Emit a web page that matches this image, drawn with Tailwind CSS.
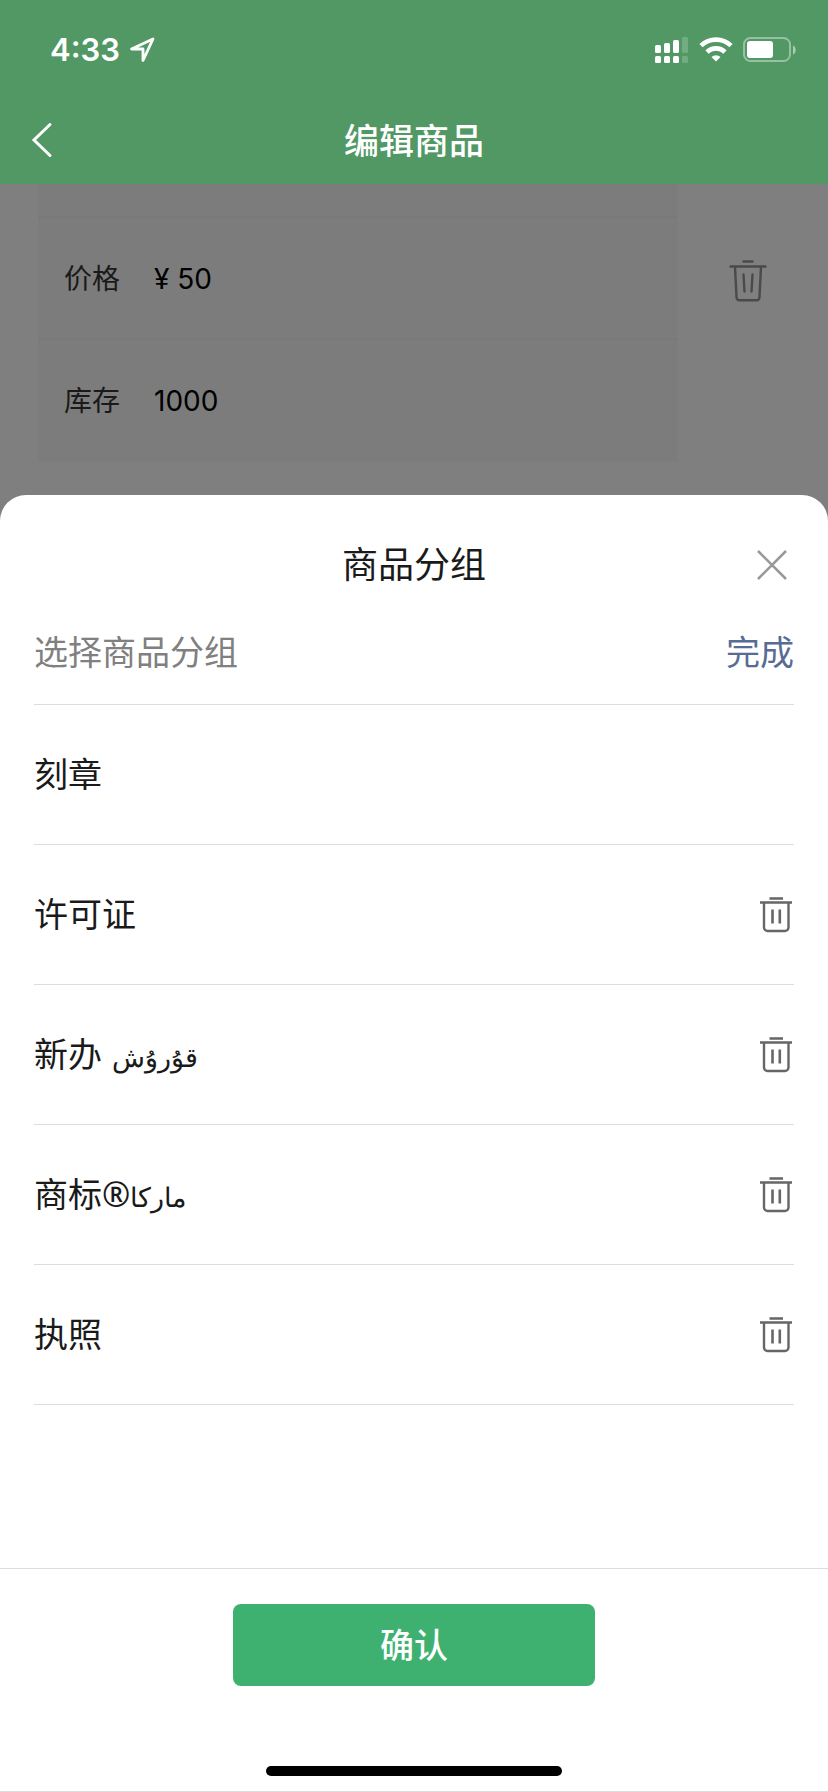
<!DOCTYPE html>
<html lang="zh-CN">
<head>
<meta charset="utf-8">
<meta name="viewport" content="width=device-width, initial-scale=1">
<title>编辑商品</title>
<script src="https://cdn.jsdelivr.net/npm/@tailwindcss/browser@4"></script>
</head>
<body class="flex min-h-screen flex-col bg-[#7f7f7f] font-['Inter','Noto_Sans_CJK_SC',sans-serif] text-[#1a1a1a]">
<svg class="hidden" aria-hidden="true">
  <symbol id="trash" viewBox="0 0 36 36" fill="none" stroke="currentColor">
    <path d="M11.500 1.500h13.500M2 5.500h32" stroke-width="2.400"/>
    <path d="M6 6v24.500a3.500 3.500 0 0 0 3.500 3.500h17.500a3.500 3.500 0 0 0 3.500-3.500V6" stroke-width="2.400"/>
    <path d="M14.500 12.500v14M21.800 12.500v14" stroke-width="2.600"/>
  </symbol>
</svg>

<header class="bg-[#519865] text-white">
  <div class="flex h-[100px] items-center justify-between pr-8 pl-[50px]">
    <div class="flex items-center gap-2">
      <time class="text-[31px] leading-10 font-semibold">4:33</time>
      <svg class="size-7" viewBox="0 0 28 28" fill="none" stroke="currentColor" stroke-width="2.800" stroke-linejoin="round"><path d="M25 3 3.500 13H15v11.500z"/></svg>
    </div>
    <div class="flex items-center gap-[10px]">
      <svg class="h-[26px] w-[34px]" viewBox="0 0 34 26" fill="currentColor">
        <rect x="0" y="8" width="6" height="8" rx="1.500"/><rect x="9" y="6" width="6" height="10" rx="1.500"/><rect x="18" y="3" width="6" height="13" rx="1.500"/><rect x="27" y="0" width="6" height="16" rx="1.500" opacity=".2"/>
        <rect x="0" y="19" width="6" height="7" rx="1.500"/><rect x="9" y="19" width="6" height="7" rx="1.500"/><rect x="18" y="19" width="6" height="7" rx="1.500"/><rect x="27" y="19" width="6" height="7" rx="1.500" opacity=".2"/>
      </svg>
      <svg class="h-[26px] w-[34px]" viewBox="0 0 34 26" fill="none" stroke="currentColor" stroke-width="4.600">
        <path d="M2 8.700a21.500 21.500 0 0 1 30 0M8 15a13 13 0 0 1 18 0"/>
        <path d="M12.500 20a6.500 6.500 0 0 1 9 0L17 24.500z" fill="currentColor" stroke="none"/>
      </svg>
      <svg class="h-[26px] w-[53px]" viewBox="0 0 53 26" fill="currentColor">
        <rect x="1" y="1" width="46" height="23" rx="6.500" fill="none" stroke="currentColor" stroke-width="2" opacity=".4"/>
        <rect x="4" y="4" width="26" height="17" rx="3"/>
        <path d="M50 8.500c3.600 1.200 3.600 7.800 0 9z" opacity=".5"/>
      </svg>
    </div>
  </div>
  <div class="grid h-[84px] grid-cols-[1fr_auto_1fr] items-start px-6">
    <button type="button" aria-label="返回" class="mt-5 size-10 justify-self-start">
      <svg class="size-10" viewBox="0 0 40 40" fill="none" stroke="currentColor" stroke-width="3" stroke-linecap="round"><path d="M26 4.500 10 20l16 15.500"/></svg>
    </button>
    <h1 class="mt-[17px] text-[35px] leading-12 font-medium">编辑商品</h1>
  </div>
</header>

<main class="mb-[33px] flex items-start">
  <dl class="ml-[38px] min-w-0 flex-1 bg-[#7c7c7c] text-[28px]">
    <div class="h-[34px] border-b-2 border-[#797979]"></div>
    <div class="flex h-[122px] items-center border-b-2 border-[#797979] pt-[2px] pl-[26px]">
      <dt class="w-[90px]">价格</dt><dd class="text-black">¥ 50</dd>
    </div>
    <div class="flex h-[122px] items-center pl-[26px]">
      <dt class="w-[90px]">库存</dt><dd class="text-black">1000</dd>
    </div>
  </dl>
  <button type="button" aria-label="删除规格" class="mt-[74px] flex w-[150px] justify-center pr-[10px] text-[#4a4a4a]">
    <svg class="size-[46px]" viewBox="0 0 46 46" fill="none" stroke="currentColor" stroke-width="2.400" stroke-linecap="round"><path d="M18.500 3.500h9M5.500 8.500h35M10 9l1.500 30a3 3 0 0 0 3 3.300h17a3 3 0 0 0 3-3.300L36 9M18.500 16.500l1 17M27.500 16.500l-1 17"/></svg>
  </button>
</main>

<section role="dialog" aria-labelledby="sheet-title" class="flex flex-1 flex-col rounded-t-[26px] border-b border-[#dddddd] bg-white pt-[34px]">
  <div class="grid h-[72px] grid-cols-[1fr_auto_1fr] items-center px-[34px]">
    <h2 id="sheet-title" class="col-start-2 text-[36px] leading-12">商品分组</h2>
    <button type="button" aria-label="关闭" class="mr-1 justify-self-end text-[#999999]">
      <svg class="size-9" viewBox="0 0 36 36" fill="none" stroke="currentColor" stroke-width="2.600"><path d="m4 4 28 28M32 4 4 32"/></svg>
    </button>
  </div>
  <div class="mx-[34px] flex h-[104px] items-center justify-between border-b border-[#dddddd] text-[34px]">
    <p class="text-[#808080]">选择商品分组</p>
    <button type="button" class="text-[#576b95]">完成</button>
  </div>
  <ul class="mx-[34px] flex-1 text-[34px]">
    <li class="flex h-[140px] items-center justify-between border-b border-[#dddddd]"><span>刻章</span></li>
    <li class="flex h-[140px] items-center justify-between border-b border-[#dddddd]"><span>许可证</span>
      <button type="button" aria-label="删除许可证" class="text-[#666666]"><svg class="size-9"><use href="#trash"/></svg></button></li>
    <li class="flex h-[140px] items-center justify-between border-b border-[#dddddd]"><span>新办 <bdi lang="ug" class="text-[27px]">قۇرۇش</bdi></span>
      <button type="button" aria-label="删除新办" class="text-[#666666]"><svg class="size-9"><use href="#trash"/></svg></button></li>
    <li class="flex h-[140px] items-center justify-between border-b border-[#dddddd]"><span>商标<span class="font-['Noto_Sans',sans-serif] leading-none">®</span><bdi lang="ug" class="text-[27px]">ماركا</bdi></span>
      <button type="button" aria-label="删除商标" class="text-[#666666]"><svg class="size-9"><use href="#trash"/></svg></button></li>
    <li class="flex h-[140px] items-center justify-between border-b border-[#dddddd]"><span>执照</span>
      <button type="button" aria-label="删除执照" class="text-[#666666]"><svg class="size-9"><use href="#trash"/></svg></button></li>
  </ul>
  <footer class="flex flex-col items-center border-t border-[#dddddd] pt-[35px] pb-[15px]">
    <button type="button" class="h-[82px] w-[362px] rounded-lg bg-[#3eb171] text-[34px] font-medium text-white">确认</button>
    <div class="mt-20 h-[10px] w-[296px] rounded-full bg-black"></div>
  </footer>
</section>
</body>
</html>
